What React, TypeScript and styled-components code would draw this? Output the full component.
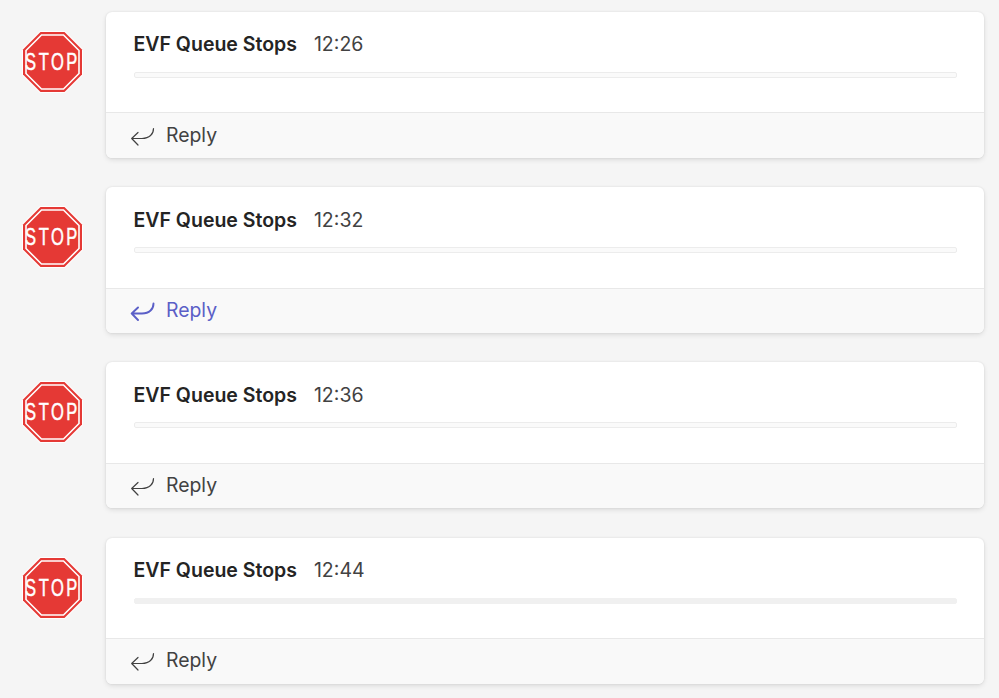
import React from 'react';
import styled, { createGlobalStyle } from 'styled-components';

const GlobalStyle = createGlobalStyle`
  html, body {
    margin: 0;
    padding: 0;
    background: #f5f5f5;
    font-family: Inter, "Liberation Sans", sans-serif;
  }
`;

const Feed = styled.div`
  width: 999px;
  height: 698px;
  overflow: hidden;
  box-sizing: border-box;
  padding: 12px 15px 0 22px;
  display: flex;
  flex-direction: column;
  gap: 29.2px;
`;

const Row = styled.div`
  display: flex;
  align-items: flex-start;
  gap: 23px;
`;

const Avatar = styled.svg`
  width: 61px;
  height: 62px;
  margin-top: 19px;
  flex: none;
`;

const Card = styled.div`
  flex: 1;
  height: 146px;
  display: flex;
  flex-direction: column;
  border-radius: 6px;
  background: #fff;
  box-shadow: 0 0 2px rgba(0, 0, 0, 0.1), 0 2px 5px rgba(0, 0, 0, 0.1);
  overflow: hidden;
`;

const Body = styled.div`
  height: 101.4px;
  box-sizing: border-box;
  padding: 20.4px 27px 0 27.5px;
  border-bottom: 1px solid #e8e8e8;
`;

const Heading = styled.div`
  display: flex;
  align-items: baseline;
  gap: 17px;
  height: 24px;
  line-height: 24px;
  color: #242424;
`;

const Sender = styled.span`
  font-size: 19.5px;
  font-weight: 600;
`;

const Time = styled.span`
  font-size: 19.5px;
  color: #424242;
`;

const Bar = styled.div<{ $solid?: boolean }>`
  height: 6px;
  margin-top: 15.6px;
  box-sizing: border-box;
  border-radius: 2px;
  border: 1px solid ${({ $solid }) => ($solid ? '#f0f0f0' : '#ececec')};
  background: ${({ $solid }) => ($solid ? '#f0f0f0' : '#fafafa')};
`;

const Footer = styled.div<{ $active?: boolean }>`
  flex: 1;
  display: flex;
  align-items: center;
  gap: 10px;
  padding: 0 0 2px 24px;
  background: #f9f9f9;
  color: ${({ $active }) => ($active ? '#5b5fc7' : '#424242')};
`;

const ReplyLabel = styled.span`
  font-size: 19.4px;
  line-height: 24px;
`;

const StopSign = () => (
  <Avatar viewBox="0 0 61 62">
    <polygon points="18,0 43,0 61,18 61,44 43,62 18,62 0,44 0,18" fill="#fff" />
    <polygon points="18.5,1 42.5,1 60,18.5 60,43.5 42.5,61 18.5,61 1,43.5 1,18.5" fill="#e53935" />
    <polygon
      points="19.5,4 41.5,4 57,19.5 57,42.5 41.5,58 19.5,58 4,42.5 4,19.5"
      fill="none"
      stroke="#fff"
      strokeWidth="1.6"
    />
    <text
      transform="translate(30.5 39) scale(0.72 1)"
      textAnchor="middle"
      fill="#fff"
      stroke="#fff"
      strokeWidth="0.5"
      fontFamily="'Liberation Sans', sans-serif"
      fontSize="23"
      letterSpacing="3.5"
    >
      STOP
    </text>
  </Avatar>
);

const ReplyIcon = ({ active }: { active?: boolean }) => (
  <svg width="26" height="22" viewBox="0 0 26 22" fill="none">
    <path
      d="M23.5 4.5C23.5 10 19.5 14.5 12 14.5H1.7M1.7 14.5L8 8.5M1.7 14.5L8 21"
      stroke="currentColor"
      strokeWidth={active ? 1.9 : 1.2}
      strokeLinecap="round"
      strokeLinejoin="round"
    />
  </svg>
);

const messages = [
  { time: '12:26' },
  { time: '12:32', active: true },
  { time: '12:36' },
  { time: '12:44', solid: true },
];

export default function App() {
  return (
    <>
      <GlobalStyle />
      <Feed>
        {messages.map((m) => (
          <Row key={m.time}>
            <StopSign />
            <Card>
              <Body>
                <Heading>
                  <Sender>EVF Queue Stops</Sender>
                  <Time>{m.time}</Time>
                </Heading>
                <Bar $solid={m.solid} />
              </Body>
              <Footer $active={m.active}>
                <ReplyIcon active={m.active} />
                <ReplyLabel>Reply</ReplyLabel>
              </Footer>
            </Card>
          </Row>
        ))}
      </Feed>
    </>
  );
}
